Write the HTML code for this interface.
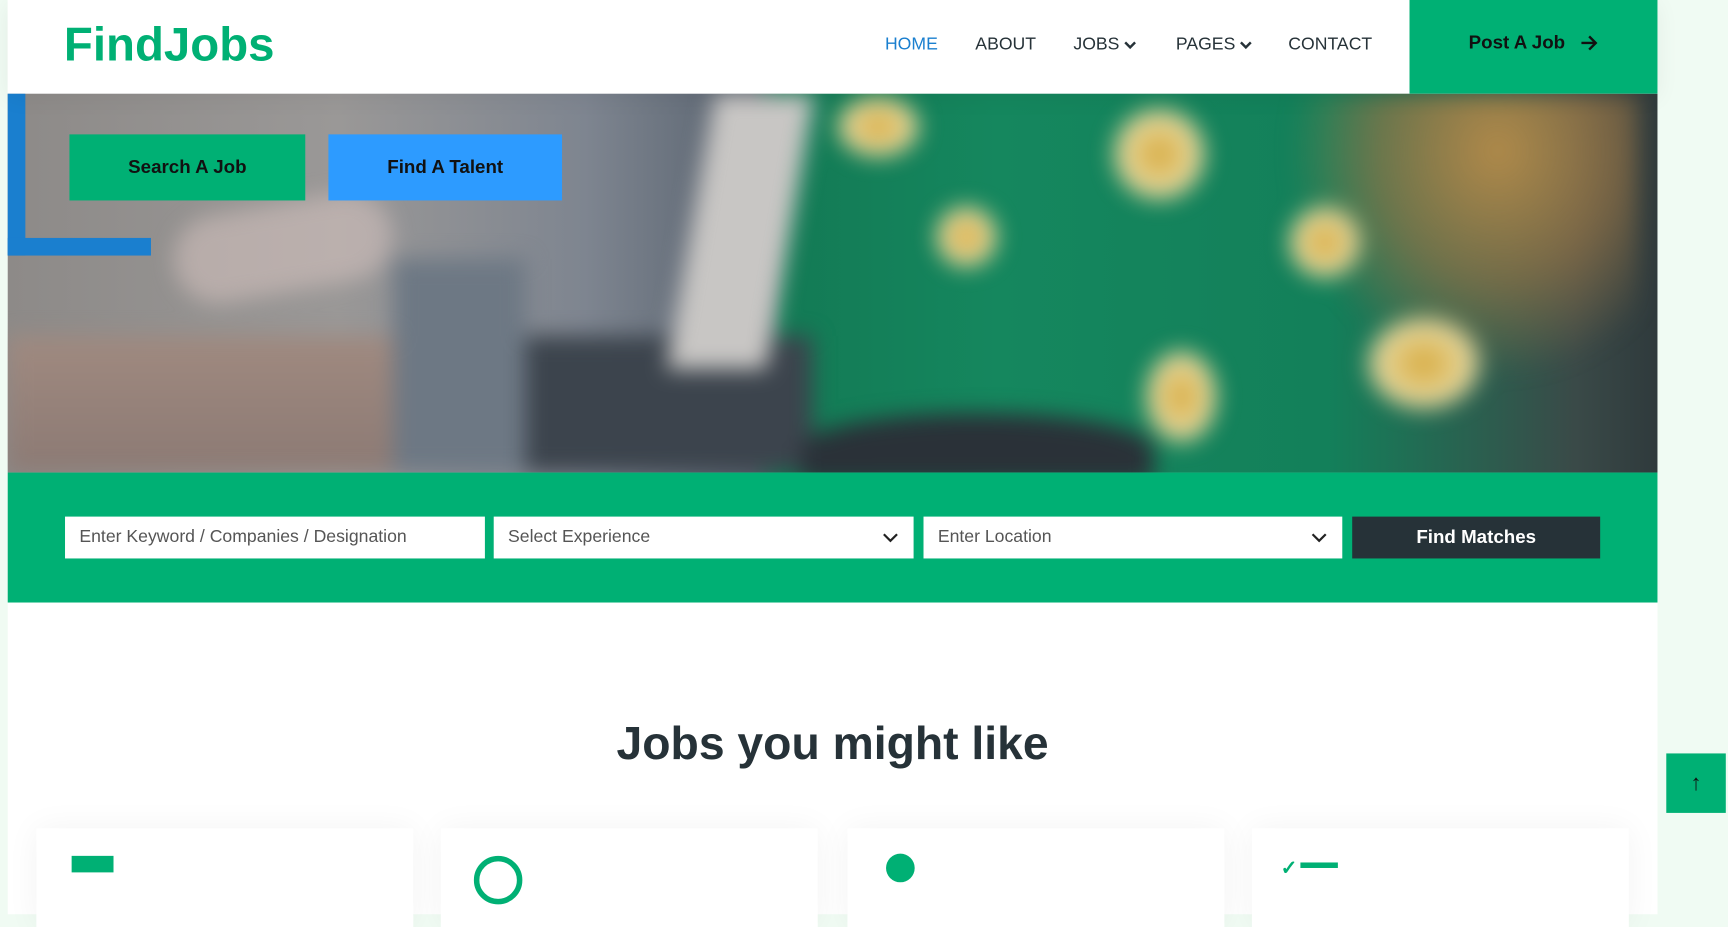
<!DOCTYPE html>
<html><head><meta charset="utf-8"><style>
*{margin:0;padding:0;box-sizing:border-box}
html,body{width:1728px;height:868px;overflow:hidden;background:#f0fbf3;font-family:"Liberation Sans",sans-serif}
#w{position:absolute;left:0;top:0;width:1568px;height:830px;transform:scale(1.10204,1.1015);transform-origin:0 0}
.a{position:absolute}
.nav{font-size:16px;color:#263238;top:32px}
.btn{font-weight:bold;font-size:17px;color:#111;display:flex;align-items:center;justify-content:center}
.inp{top:469px;height:38px;background:#fff;font-size:16px;color:#555;padding-left:13px;display:flex;align-items:center}
.card{top:752px;height:90px;width:342px;background:#fff;box-shadow:0 0 30px rgba(0,0,0,.05)}
.f{border-radius:50%;background:radial-gradient(#d6a83a,#e8d9a0 55%,rgba(0,0,0,0) 72%)}
</style></head><body><div id="w">
<div class="a" style="left:7px;top:0;width:1497px;height:830px;background:#fff"></div>
<!-- hero -->
<div class="a" style="left:7px;top:85px;width:1497px;height:344px;overflow:hidden;background:linear-gradient(90deg,#8d8a88 0%,#9a9897 20%,#7e8590 35%,#5a6470 45%,#137a55 47%,#15875e 60%,#13805a 80%,#3a4a48 95%,#2f3a3c 100%)">
 <div style="position:absolute;inset:0;filter:blur(10px)">
 <div class="a" style="left:0;top:220px;width:360px;height:124px;background:linear-gradient(#a08a80,#8c7a74)"></div>
 <div class="a" style="left:350px;top:150px;width:120px;height:194px;background:#6d7884"></div>
 <div class="a" style="left:470px;top:220px;width:260px;height:124px;background:#3c444d"></div>
 <div class="a" style="left:620px;top:0;width:90px;height:250px;background:#c8c6c4;transform:skewX(-10deg)"></div>
 <div class="a" style="left:720px;top:290px;width:320px;height:64px;background:#2a3138;border-radius:50% 50% 0 0"></div>
 <div class="a" style="left:1160px;top:0;width:320px;height:260px;background:radial-gradient(ellipse at 60% 20%,#b08a4a 0%,rgba(160,120,70,.6) 40%,rgba(0,0,0,0) 70%)"></div>
 <div class="a f" style="left:1000px;top:10px;width:90px;height:90px"></div>
 <div class="a f" style="left:840px;top:100px;width:60px;height:60px"></div>
 <div class="a f" style="left:1230px;top:200px;width:110px;height:90px"></div>
 <div class="a f" style="left:1030px;top:230px;width:70px;height:90px"></div>
 <div class="a f" style="left:750px;top:0;width:80px;height:60px"></div>
 <div class="a f" style="left:1160px;top:100px;width:70px;height:70px"></div>
 <div class="a" style="left:150px;top:100px;width:200px;height:80px;background:rgba(220,200,195,.5);border-radius:40px;transform:rotate(-10deg)"></div>
 </div>
</div>
<div class="a" style="left:7px;top:85px;width:16px;height:147px;background:#1a7fcf"></div>
<div class="a" style="left:7px;top:216px;width:130px;height:16px;background:#1a7fcf"></div>
<div class="a btn" style="left:63px;top:122px;width:214px;height:60px;background:#00b074">Search A Job</div>
<div class="a btn" style="left:298px;top:122px;width:212px;height:60px;background:#2d9bff">Find A Talent</div>
<!-- header -->
<div class="a" style="left:7px;top:0;width:1497px;height:85px;background:#fff;box-shadow:0 4px 20px rgba(0,0,0,.06)"></div>
<div class="a" style="left:58px;top:17px;font-size:43px;font-weight:bold;color:#00b074">FindJobs</div>
<div class="a nav" style="left:803px;color:#1a7fcf">HOME</div>
<div class="a nav" style="left:885px">ABOUT</div>
<div class="a nav" style="left:974px">JOBS <svg width="11" height="8"><path d="M1 1.5l4.5 4.5 4.5-4.5" stroke="#263238" stroke-width="2.2" fill="none"/></svg></div>
<div class="a nav" style="left:1067px">PAGES <svg width="11" height="8"><path d="M1 1.5l4.5 4.5 4.5-4.5" stroke="#263238" stroke-width="2.2" fill="none"/></svg></div>
<div class="a nav" style="left:1169px">CONTACT</div>
<div class="a btn" style="left:1279px;top:0;width:225px;height:85px;background:#00b074;padding-bottom:8px">Post A Job&nbsp;&nbsp;&nbsp;<svg width="16" height="14"><path d="M1 7h13M8 1l6 6-6 6" stroke="#111" stroke-width="2.2" fill="none"/></svg></div>
<!-- search -->
<div class="a" style="left:7px;top:429px;width:1497px;height:118px;background:#00b074"></div>
<div class="a inp" style="left:59px;width:381px">Enter Keyword / Companies / Designation</div>
<div class="a inp" style="left:448px;width:381px">Select Experience<svg class="a" style="right:14px;top:14px" width="14" height="10"><path d="M1 2l6 6 6-6" stroke="#222" stroke-width="2" fill="none"/></svg></div>
<div class="a inp" style="left:838px;width:380px">Enter Location<svg class="a" style="right:14px;top:14px" width="14" height="10"><path d="M1 2l6 6 6-6" stroke="#222" stroke-width="2" fill="none"/></svg></div>
<div class="a btn" style="left:1227px;top:469px;width:225px;height:38px;background:#263238;color:#fff">Find Matches</div>
<!-- content -->
<div class="a" style="left:7px;top:651px;width:1497px;text-align:center;font-size:42px;font-weight:bold;color:#263238">Jobs you might like</div>
<div class="a card" style="left:33px"></div>
<div class="a card" style="left:400px"></div>
<div class="a card" style="left:769px"></div>
<div class="a card" style="left:1136px"></div>
<div class="a" style="left:65px;top:777px;width:38px;height:15px;background:#00b074"></div>
<div class="a" style="left:430px;top:777px;width:44px;height:44px;border:5px solid #00b074;border-radius:50%"></div>
<div class="a" style="left:804px;top:775px;width:26px;height:26px;background:#00b074;border-radius:50%"></div>
<div class="a" style="left:1180px;top:783px;width:34px;height:5px;background:#00b074"></div>
<div class="a" style="left:1162px;top:778px;color:#00b074;font-size:18px;font-weight:bold">&#10003;</div>
<div class="a" style="left:1512px;top:684px;width:54px;height:54px;background:#00b074;color:#111;display:flex;align-items:center;justify-content:center;font-size:20px">&#8593;</div>
</div></body></html>
